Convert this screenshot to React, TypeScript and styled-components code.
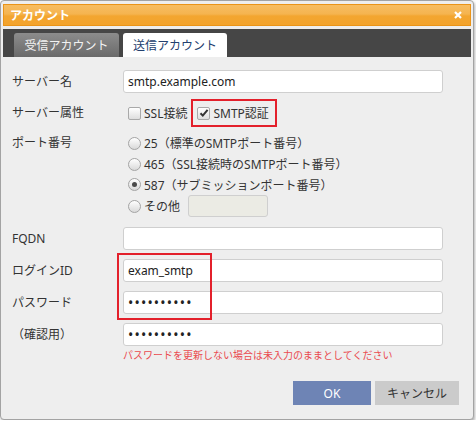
import styled, { createGlobalStyle } from 'styled-components';

const GlobalStyle = createGlobalStyle`
  body {
    margin: 0;
    background: #fff;
    font-family: "Noto Sans", "Noto Sans CJK JP", sans-serif;
    font-size: 12px;
    color: #333;
  }
  * { box-sizing: border-box; }
`;

const Dialog = styled.div`
  width: 474px;
  height: 420px;
  padding: 3px 2px 2px;
  border: 1px solid #a3a3a3;
  border-radius: 4px;
  background: #eeeeee;
  box-shadow: 1px 2px 3px rgba(0, 0, 0, 0.3);
  display: flex;
  flex-direction: column;
`;

const TitleBar = styled.div`
  height: 22px;
  padding: 0 8px 0 6px;
  display: flex;
  align-items: center;
  justify-content: space-between;
  border: 1px solid #ea9418;
  background: linear-gradient(#f7bd62 0%, #f5b44f 45%, #f3a630 55%, #f3a32c 100%);
  color: #fff;
  font-weight: 700;
  font-size: 12px;
`;

const TabBar = styled.div`
  margin-top: 3px;
  height: 28px;
  padding: 4px 0 0 11px;
  display: flex;
  gap: 4px;
  background: #464646;
`;

const Tab = styled.div<{ $active?: boolean }>`
  height: 24px;
  width: ${({ $active }) => ($active ? 104 : 105)}px;
  border-radius: 3px 3px 0 0;
  display: flex;
  align-items: center;
  justify-content: center;
  font-size: 12px;
  color: ${({ $active }) => ($active ? '#23406e' : '#f2f2f2')};
  background: ${({ $active }) =>
    $active ? '#fff' : 'linear-gradient(#8c8c8c, #6a6a6a)'};
`;

const Body = styled.div`
  flex: 1;
  padding: 13px 12px 12px 9px;
  display: flex;
  flex-direction: column;
`;

const Field = styled.div<{ $gap?: number; $top?: boolean }>`
  display: grid;
  grid-template-columns: 111px 320px;
  align-items: ${({ $top }) => ($top ? 'start' : 'center')};
  margin-top: ${({ $gap }) => $gap ?? 0}px;
`;

const Label = styled.div<{ $line?: number }>`
  line-height: ${({ $line }) => $line ?? 16}px;
  color: #333;
`;

const Input = styled.input`
  width: 100%;
  height: 23px;
  padding: 0 4px;
  border: 1px solid #cfcfcf;
  border-radius: 3px;
  background: #fff;
  font-family: inherit;
  font-size: 12px;
  color: #222;
  outline: none;
  &[type='password'] {
    font-size: 14px;
    letter-spacing: 1.2px;
  }
`;

const SmallInput = styled(Input)`
  width: 80px;
  height: 22px;
  background: #ebebe4;
  margin-left: 5px;
`;

const Options = styled.div`
  display: flex;
  align-items: center;
  padding-left: 5px;
  height: 28px;
`;

const Option = styled.label<{ $highlight?: boolean }>`
  display: flex;
  align-items: center;
  gap: 3px;
  height: 28px;
  ${({ $highlight }) =>
    $highlight
      ? `margin-left: 4px; padding: 0 6px 0 4px; border: 2px solid #e3202b;`
      : ''}
`;

const Box = styled.span`
  width: 13px;
  height: 13px;
  border: 1px solid #a9a9a9;
  border-radius: 2px;
  background: linear-gradient(#ffffff, #dedede);
  display: inline-flex;
  align-items: center;
  justify-content: center;
`;

const RadioList = styled.div`
  padding-left: 5px;
  display: flex;
  flex-direction: column;
`;

const RadioRow = styled.label<{ $h?: number }>`
  display: flex;
  align-items: center;
  gap: 3px;
  height: ${({ $h }) => $h ?? 20.7}px;
`;

const Radio = styled.span<{ $checked?: boolean }>`
  width: 13px;
  height: 13px;
  border-radius: 50%;
  border: 1px solid #a4a4a4;
  background: linear-gradient(#ffffff, #d9d9d9);
  display: inline-flex;
  align-items: center;
  justify-content: center;
  &::after {
    content: '';
    width: 5px;
    height: 5px;
    border-radius: 50%;
    background: ${({ $checked }) => ($checked ? '#4a4a4a' : 'transparent')};
  }
`;

const Highlight = styled.div`
  position: relative;
`;

const RedFrame = styled.div`
  position: absolute;
  left: -6px;
  top: -6px;
  width: 95px;
  height: 67px;
  border: 2px solid #e3202b;
  pointer-events: none;
`;

const Note = styled.div`
  margin: 2px 0 0 111px;
  font-size: 10px;
  line-height: 15px;
  color: #ea4a4f;
`;

const Buttons = styled.div`
  margin-top: auto;
  display: flex;
  justify-content: flex-end;
  gap: 4px;
`;

const Button = styled.button<{ $primary?: boolean }>`
  height: 24px;
  width: ${({ $primary }) => ($primary ? 78 : 84)}px;
  border: none;
  font-family: inherit;
  font-size: 12px;
  color: ${({ $primary }) => ($primary ? '#fff' : '#333')};
  background: ${({ $primary }) => ($primary ? '#6e84b5' : '#cbcbcb')};
`;

const Check = () => (
  <svg width="10" height="10" viewBox="0 0 10 10">
    <path d="M1.5 5.2 L3.8 7.6 L8.6 1.8" fill="none" stroke="#333" strokeWidth="2" />
  </svg>
);

const Close = () => (
  <svg width="8" height="8" viewBox="0 0 8 8">
    <path d="M1 1 L7 7 M7 1 L1 7" stroke="#fff" strokeWidth="2.2" />
  </svg>
);

export default function App() {
  return (
    <>
      <GlobalStyle />
      <Dialog>
        <TitleBar>
          <span>アカウント</span>
          <Close />
        </TitleBar>
        <TabBar>
          <Tab>受信アカウント</Tab>
          <Tab $active>送信アカウント</Tab>
        </TabBar>
        <Body>
          <Field>
            <Label>サーバー名</Label>
            <Input readOnly defaultValue="smtp.example.com" />
          </Field>
          <Field $gap={6}>
            <Label>サーバー属性</Label>
            <Options>
              <Option>
                <Box />
                SSL接続
              </Option>
              <Option $highlight>
                <Box>
                  <Check />
                </Box>
                SMTP認証
              </Option>
            </Options>
          </Field>
          <Field $gap={6} $top>
            <Label $line={20.7}>ポート番号</Label>
            <RadioList>
              <RadioRow>
                <Radio />
                25（標準のSMTPポート番号）
              </RadioRow>
              <RadioRow>
                <Radio />
                465（SSL接続時のSMTPポート番号）
              </RadioRow>
              <RadioRow>
                <Radio $checked />
                587（サブミッションポート番号）
              </RadioRow>
              <RadioRow $h={22}>
                <Radio />
                その他
                <SmallInput disabled />
              </RadioRow>
            </RadioList>
          </Field>
          <Field $gap={10}>
            <Label>FQDN</Label>
            <Input readOnly defaultValue="" />
          </Field>
          <Field $gap={9}>
            <Label>ログインID</Label>
            <Highlight>
              <Input readOnly defaultValue="exam_smtp" />
              <RedFrame />
            </Highlight>
          </Field>
          <Field $gap={9}>
            <Label>パスワード</Label>
            <Input type="password" readOnly defaultValue="password12" />
          </Field>
          <Field $gap={9}>
            <Label>（確認用）</Label>
            <Input type="password" readOnly defaultValue="password12" />
          </Field>
          <Note>パスワードを更新しない場合は未入力のままとしてください</Note>
          <Buttons>
            <Button $primary>OK</Button>
            <Button>キャンセル</Button>
          </Buttons>
        </Body>
      </Dialog>
    </>
  );
}
